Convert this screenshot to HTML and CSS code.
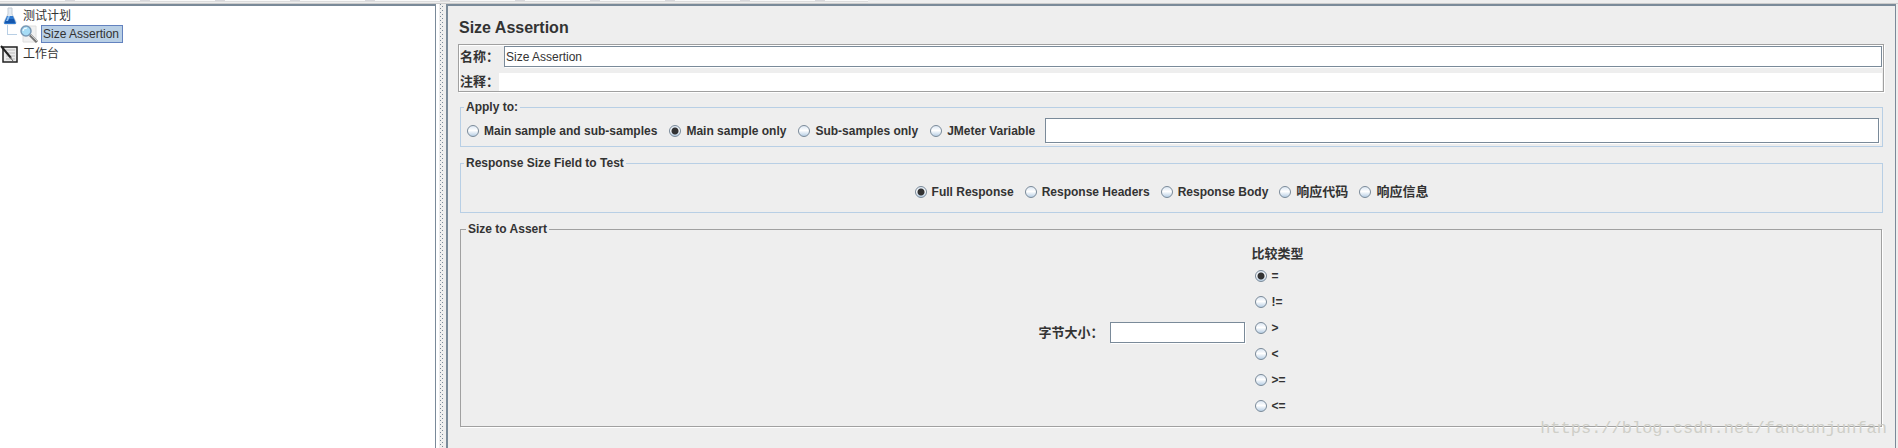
FILE: index.html
```html
<!DOCTYPE html>
<html lang="zh-CN">
<head>
  <meta charset="UTF-8">
  <title>Size Assertion</title>
  <link rel="stylesheet" href="styles.css">
</head>
<body>
  <div class="toolbar"><div class="toolbar-buttons"></div></div>
  <div class="split">
    <nav class="tree">
      <ul>
        <li class="node">
          <svg class="icon" viewBox="0 0 18 18">
            <path d="M8 1h4v6l4 8q0 2-1 2H5q-1 0-1-2l4-8z" fill="#e4ebf2" stroke="#c3ccd5"/>
            <path d="M7 9h6l3 7q0 1-1 1H5q-1 0-1-1z" fill="#2f79cf"/>
            <path d="M6 12h8l1 4H5z" fill="#1557ad"/>
            <path d="M8 9h2l-2 5H6z" fill="#8fc0f0"/>
          </svg>
          <span>测试计划</span>
        </li>
        <li class="node child">
          <svg class="icon" viewBox="0 0 18 18">
            <path d="M3 1h13v16H3z" fill="#f1f1f1" stroke="#dedede"/>
            <path d="M10 10l7 7" stroke="#777" stroke-width="3"/>
            <path d="M11 10l6 6" stroke="#ccc"/>
            <circle cx="6" cy="6" r="5" fill="#a6dcf5" stroke="#7898b5" stroke-width="1.5"/>
            <path d="M3 6q0-3 4-3" stroke="#fff" fill="none"/>
          </svg>
          <span class="selected">Size Assertion</span>
        </li>
        <li class="node last">
          <svg class="icon" viewBox="0 0 18 18">
            <path d="M3 2h14v15H3z" fill="#ececec" stroke="#222" stroke-width="1.5"/>
            <path d="M6 5h9M6 8h9M6 11h9M6 14h9" stroke="#bbb"/>
            <path d="M1 1l10 12" stroke="#222" stroke-width="2"/>
            <path d="M10 12l3 4" stroke="#555"/>
          </svg>
          <span>工作台</span>
        </li>
      </ul>
    </nav>
    <div class="divider"></div>
    <main class="panel">
      <h1>Size Assertion</h1>
      <div class="names">
        <div class="name-row">
          <label for="name">名称：</label>
          <input class="field" id="name" type="text" value="Size Assertion">
        </div>
        <div class="name-row comment-row">
          <label for="comment">注释：</label>
          <input class="comment" id="comment" type="text">
        </div>
      </div>

      <fieldset class="apply">
        <legend>Apply to:</legend>
        <div class="apply-row">
          <label class="option"><input type="radio" name="scope">Main sample and sub-samples</label>
          <label class="option"><input type="radio" name="scope" checked>Main sample only</label>
          <label class="option"><input type="radio" name="scope">Sub-samples only</label>
          <label class="option"><input type="radio" name="scope">JMeter Variable</label>
          <input class="field variable" type="text" aria-label="JMeter Variable">
        </div>
      </fieldset>

      <fieldset class="response">
        <legend>Response Size Field to Test</legend>
        <div class="response-row">
          <label class="option"><input type="radio" name="part" checked>Full Response</label>
          <label class="option"><input type="radio" name="part">Response Headers</label>
          <label class="option"><input type="radio" name="part">Response Body</label>
          <label class="option cjk"><input type="radio" name="part">响应代码</label>
          <label class="option cjk"><input type="radio" name="part">响应信息</label>
        </div>
      </fieldset>

      <fieldset class="assert">
        <legend>Size to Assert</legend>
        <div class="assert-row">
          <label for="size">字节大小：</label>
          <input class="field size" id="size" type="text">
          <div class="compare">
            <div class="compare-title">比较类型</div>
            <label class="option"><input type="radio" name="op" checked>=</label>
            <label class="option"><input type="radio" name="op">!=</label>
            <label class="option"><input type="radio" name="op">&gt;</label>
            <label class="option"><input type="radio" name="op">&lt;</label>
            <label class="option"><input type="radio" name="op">&gt;=</label>
            <label class="option"><input type="radio" name="op">&lt;=</label>
          </div>
        </div>
      </fieldset>
      <div class="watermark">https://blog.csdn.net/fancunjunfan</div>
    </main>
  </div>
</body>
</html>
```
FILE: styles.css
```css
* { box-sizing: border-box; }
body { margin: 0; height: 100vh; display: flex; flex-direction: column; overflow: hidden; background: #eee; color: #333; font: bold 12px/16px "Liberation Sans", "Noto Sans CJK SC", sans-serif; }
.toolbar { height: 4px; border-bottom: 1px solid #ccc; }
.toolbar-buttons { width: 868px; height: 2px; background: repeating-linear-gradient(90deg, #fafafa 0 65px, #d8d8dc 65px 75px); border-bottom: 1px solid #ddd; }
.split { flex: 1; display: flex; min-height: 0; }

.tree { width: 436px; background: #fff; border-top: 2px solid #7a8a99; border-right: 1px solid #7a8a99; font-weight: normal; }
.tree ul { list-style: none; margin: 0; padding: 0; }
.node { display: flex; align-items: center; gap: 5px; height: 19px; }
.node .icon { width: 18px; height: 18px; }
.child { height: 18px; padding-left: 20px; gap: 3px; background: linear-gradient(#b8cfe5, #b8cfe5) 7px 0 / 1px 10px no-repeat, linear-gradient(#b8cfe5, #b8cfe5) 7px 9px / 10px 1px no-repeat; }
.last { height: 21px; }
.selected { background: #b8cfe5; border: 1px solid #6382bf; padding: 0 3px 0 1px; }

.divider { width: 10px; border: solid #eee; border-width: 0 2px 0 3px; border-left-color: #fff; background: conic-gradient(at 1px 1px, transparent 270deg, #7a8a99 270deg) 1px 0 / 4px 4px, conic-gradient(at 1px 1px, transparent 270deg, #7a8a99 270deg) 3px 2px / 4px 4px; background-clip: padding-box; }

.panel { flex: 1; position: relative; border: solid #7a8a99; border-width: 2px 1px 0 2px; margin-right: 2px; padding: 12px 11px 0 10px; }
h1 { margin: 0 0 6px; padding-left: 1px; font-size: 16px; line-height: 20px; }
input { font: 12px/16px "Liberation Sans", "Noto Sans CJK SC", sans-serif; color: #333; margin: 0; min-width: 0; }
.field { height: 21px; padding: 0 1px; border: 1px solid #7a8a99; background: #fff; box-shadow: 1px 1px #fff; }

.names { border: 1px solid #a0a0a0; box-shadow: 1px 1px #fff, inset 1px 1px #fff; padding: 1px 1px 0; margin-bottom: 8px; }
.name-row { display: flex; align-items: center; }
.name-row label { width: 44px; font-size: 13px; }
.name-row .field { flex: 1; }
.comment-row { margin-top: 6px; }
.comment-row label { width: 39px; }
.comment { flex: 1; height: 18px; border: 0; background: #fff; }

fieldset { margin: 0 1px 0 2px; padding: 0; border: 1px solid #b8cfe5; min-width: 0; }
legend { margin-left: 3px; padding: 0 2px; line-height: 14px; }
.option { display: flex; align-items: center; gap: 5px; white-space: nowrap; }
.cjk { font-size: 13px; }
input[type=radio] { appearance: none; width: 12px; height: 12px; flex: none; border: 1px solid #7a8a99; border-radius: 50%; background: linear-gradient(#dce7f3, #fff 45%, #b8cfe5); }
input[type=radio]:checked { background: radial-gradient(#333 3px, transparent 4px), linear-gradient(#dce7f3, #fff 45%, #b8cfe5); }

.apply { margin-bottom: 9px; }
.apply-row { display: flex; align-items: center; gap: 12px; padding: 4px 3px 3px 6px; }
.variable { flex: 1; height: 25px; margin-left: -2px; }
.response { margin-bottom: 9px; }
.response-row { display: flex; justify-content: center; gap: 11px; padding: 14px 0 12px; }
.assert { margin-right: 2px; border-color: #a0a0a0; box-shadow: 1px 1px #fff; }
.assert legend { margin-left: 5px; }
.assert-row { display: flex; align-items: center; justify-content: center; padding: 10px 0 7px; font-size: 13px; }
.size { width: 135px; margin: 0 7px 0 6px; }
.compare-title { height: 17px; }
.compare .option { height: 26px; padding-left: 3px; font-size: 12px; }

.watermark { position: absolute; right: 8px; bottom: 9px; font: 17px/20px "Liberation Mono", monospace; color: #cfcfc8; }
```
